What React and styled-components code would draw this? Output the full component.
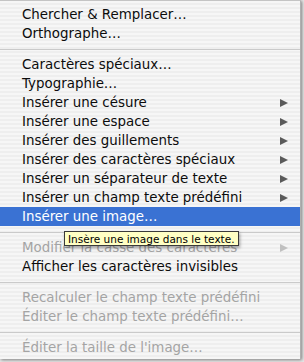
import React from "react";
import styled, { createGlobalStyle } from "styled-components";

const GlobalStyle = createGlobalStyle`
  html, body {
    margin: 0;
    padding: 0;
    background: #d8d8d8;
  }
`;

const Page = styled.div`
  width: 304px;
  height: 362px;
  overflow: hidden;
  position: relative;
  background: #e6e6e6;
`;

const Menu = styled.div`
  width: 301px;
  height: 359px;
  box-sizing: border-box;
  padding-top: 4px;
  border-top: 1px solid #c4c4c4;
  border-right: 1px solid #b0b0b0;
  box-shadow: 1px 1px 3px rgba(0, 0, 0, 0.45);
  background: repeating-linear-gradient(
    to bottom,
    #f6f6f6 0px,
    #f6f6f6 2px,
    #eeeeee 2px,
    #eeeeee 4px
  );
  font-family: "DejaVu Sans", "Liberation Sans", sans-serif;
  font-size: 13.4px;
  display: flex;
  flex-direction: column;
`;

const Item = styled.div`
  height: 19px;
  display: flex;
  align-items: center;
  padding-left: 22px;
  padding-right: 12px;
  color: ${(p) => (p.$disabled ? "#a4a4a4" : p.$active ? "#ffffff" : "#0c0c0c")};
  background: ${(p) => (p.$active ? "#3a72d3" : "transparent")};
  white-space: nowrap;
`;

const Label = styled.span`
  flex: 1;
`;

const Arrow = styled.span`
  width: 0;
  height: 0;
  border-top: 4.5px solid transparent;
  border-bottom: 4.5px solid transparent;
  border-left: 8px solid ${(p) => (p.$disabled ? "#c0c0c0" : "#5a5a5a")};
`;

const Separator = styled.div`
  height: 12px;
  display: flex;
  align-items: center;
  &::after {
    content: "";
    flex: 1;
    height: 1px;
    background: #cacaca;
  }
`;

const Tooltip = styled.div`
  position: absolute;
  left: 64px;
  top: 231px;
  height: 13px;
  padding: 0 3px;
  display: flex;
  align-items: center;
  background: #ffffc4;
  border: 1px solid #3a3a3a;
  box-shadow: 1px 2px 3px rgba(0, 0, 0, 0.35);
  font-family: "DejaVu Sans", "Liberation Sans", sans-serif;
  font-size: 10.5px;
  color: #000;
  white-space: nowrap;
`;

const items = [
  { label: "Chercher & Remplacer…" },
  { label: "Orthographe…" },
  { sep: true },
  { label: "Caractères spéciaux…" },
  { label: "Typographie…" },
  { label: "Insérer une césure", sub: true },
  { label: "Insérer une espace", sub: true },
  { label: "Insérer des guillements", sub: true },
  { label: "Insérer des caractères spéciaux", sub: true },
  { label: "Insérer un séparateur de texte", sub: true },
  { label: "Insérer un champ texte prédéfini", sub: true },
  { label: "Insérer une image…", active: true },
  { sep: true },
  { label: "Modifier la casse des caractères", sub: true, disabled: true },
  { label: "Afficher les caractères invisibles" },
  { sep: true },
  { label: "Recalculer le champ texte prédéfini", disabled: true },
  { label: "Éditer le champ texte prédéfini…", disabled: true },
  { sep: true },
  { label: "Éditer la taille de l'image…", disabled: true },
];

export default function App() {
  return (
    <Page>
      <GlobalStyle />
      <Menu>
        {items.map((it, i) =>
          it.sep ? (
            <Separator key={i} />
          ) : (
            <Item key={i} $active={it.active} $disabled={it.disabled}>
              <Label>{it.label}</Label>
              {it.sub && <Arrow $disabled={it.disabled} />}
            </Item>
          )
        )}
      </Menu>
      <Tooltip>Insère une image dans le texte.</Tooltip>
    </Page>
  );
}
